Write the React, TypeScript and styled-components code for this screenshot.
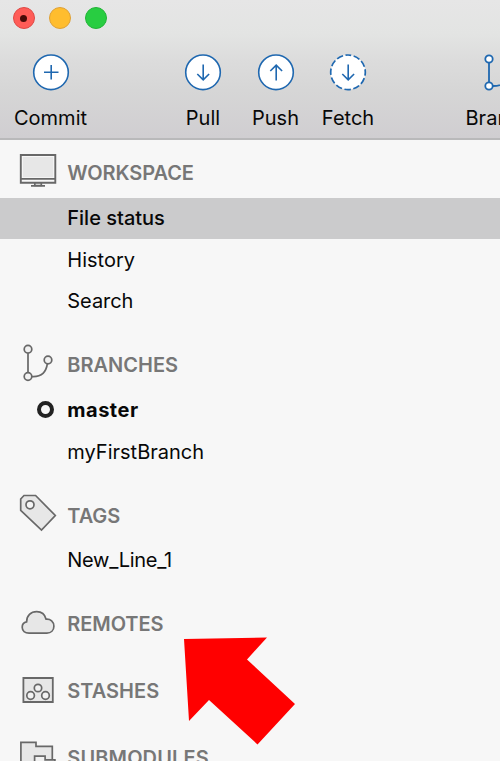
import React from 'react';
import styled, { createGlobalStyle } from 'styled-components';

const GlobalStyle = createGlobalStyle`
  * { box-sizing: border-box; }
  html, body { margin: 0; padding: 0; overflow: hidden; }
`;

const Window = styled.div`
  position: relative;
  width: 500px;
  height: 761px;
  overflow: hidden;
  background: #f7f7f7;
  color: #080808;
  font-family: Inter, 'Liberation Sans', sans-serif;
  font-size: 20px;
  line-height: 24px;
  white-space: nowrap;
`;

const TitleBar = styled.header`
  height: 140px;
  background: linear-gradient(#e6e6e6 0, #e3e4e3 34px, #dcdcdc 60px, #d6d6d6 90px, #d0ced1 138px);
  border-bottom: 2px solid #b9b9ba;
`;

const Lights = styled.div`
  display: flex;
  gap: 14.3px;
  height: 54px;
  padding: 7px 0 0 12.5px;
`;

const Light = styled.i<{ $fill: string; $edge: string }>`
  display: flex;
  align-items: center;
  justify-content: center;
  width: 22px;
  height: 22px;
  border-radius: 50%;
  background: ${p => p.$fill};
  border: 1px solid ${p => p.$edge};
`;

const Dot = styled.i`
  width: 7px;
  height: 7px;
  border-radius: 50%;
  background: #490b08;
`;

const Tools = styled.nav`
  display: flex;
`;

const Tool = styled.div<{ $width: number; $before?: number }>`
  flex: none;
  display: flex;
  flex-direction: column;
  align-items: center;
  gap: 15px;
  width: ${p => p.$width}px;
  margin-left: ${p => p.$before ?? 0}px;

  svg { display: block; overflow: visible; }
`;

const Label = styled.span`
  letter-spacing: 0;
`;

const Heading = styled.h2<{ $first?: boolean; $spacing?: number }>`
  display: flex;
  align-items: flex-start;
  height: ${p => (p.$first ? 58 : 67)}px;
  margin: 0;
  padding-top: ${p => (p.$first ? 8 : 17)}px;
  color: #777;
  font-size: 20px;
  font-weight: 600;
  letter-spacing: ${p => p.$spacing ?? 0}px;

  svg { flex: none; display: block; margin-left: 14px; overflow: visible; }
  span { margin: 13.3px 0 0 5.3px; }
`;

const Row = styled.div<{ $selected?: boolean; $weight?: number; $spacing?: number }>`
  display: flex;
  align-items: center;
  height: 41.67px;
  padding-bottom: ${p => (p.$selected ? 1 : 1.8)}px;
  background: ${p => (p.$selected ? '#cbcbcc' : 'transparent')};
  background-clip: content-box;
  font-weight: ${p => p.$weight ?? 400};
  letter-spacing: ${p => p.$spacing ?? 0}px;
`;

const Gutter = styled.span`
  flex: none;
  display: flex;
  justify-content: flex-end;
  width: 67.3px;
  padding-right: 13.5px;
`;

const Current = styled.i`
  width: 17px;
  height: 17px;
  border: 4px solid #222;
  border-radius: 50%;
`;

const Pointer = styled.svg`
  position: absolute;
  left: 180px;
  top: 634px;
`;

const blue = '#1f68b0';

const RoundIcon = ({ kind }: { kind: 'plus' | 'down' | 'up' | 'fetch' }) => (
  <svg width="36" height="37" fill="none" stroke={blue} strokeWidth="1.6">
    <circle cx="18" cy="18.3" r="17.3" fill="#fff" strokeWidth={kind === 'fetch' ? 1.7 : 1.6}
      strokeDasharray={kind === 'fetch' ? '6.6 2.46' : undefined} strokeDashoffset="3.3"
      transform="rotate(-90 18 18.3)" />
    {kind === 'plus' && <path d="M11 18.3h14.5M18.2 11v14.6" />}
    {(kind === 'down' || kind === 'fetch') && <path d="M18.2 10.5v15M12.3 20l5.9 5.8 5.9-5.8" />}
    {kind === 'up' && <path d="M18.2 26.5v-15M12.3 17l5.9-5.8 5.9 5.8" />}
  </svg>
);

const BranchTool = () => (
  <svg width="36" height="37" fill="none" stroke={blue} strokeWidth="1.8">
    <path d="M8 9v19M12 32c10 0 17-5 18-15" />
    <circle cx="8" cy="5" r="3.7" fill="#fff" />
    <circle cx="8" cy="32" r="3.7" fill="#fff" />
  </svg>
);

const grey = { fill: '#e7e7e7', stroke: '#686868', strokeWidth: 1.7 };

const Monitor = () => (
  <svg width="48" height="48" {...grey}>
    <path d="M20.8 34.5v3h6.5v-3z" fill="#f7f7f7" />
    <path d="M6.8 7h34.5v27.7H6.8z" fill="#f7f7f7" strokeWidth="1.9" />
    <path d="M8.9 9h30.3v20.2H8.9z" stroke="none" />
    <path d="M7 30.8h34M17 37.9h14" />
  </svg>
);

const Branches = () => (
  <svg width="48" height="48" {...grey} fill="none">
    <path d="M14 13v20M18 36.6c9 .5 14.2-4.2 15.4-13.2" />
    <circle cx="14" cy="9.2" r="3.8" fill="#f2f2f2" />
    <circle cx="14" cy="36.5" r="3.8" fill="#f2f2f2" />
    <circle cx="34" cy="20" r="3.8" fill="#f2f2f2" />
  </svg>
);

const Tag = () => (
  <svg width="48" height="48" {...grey}>
    <path d="M10 5.5h11.6l19.7 20L27.5 40 6.7 20.3V9z" />
    <circle cx="16" cy="14.8" r="4" fill="#f5f5f5" />
  </svg>
);

const Cloud = () => (
  <svg width="48" height="48" {...grey}>
    <path d="M15 34.1c-4 0-6.8-2.3-6.8-5.8 0-3 1.8-4.9 4.4-5.4 0-6.5 4.3-10.2 10.1-10.2 5 0 8.2 2.7 9.4 7.5 4.4-.4 7.8 2.5 7.8 7 0 4.2-3 6.9-7 6.9z" />
  </svg>
);

const Stash = () => (
  <svg width="48" height="48" {...grey}>
    <path d="M9.4 12h29.4v24H9.4z" strokeWidth="1.8" />
    <g fill="#f2f2f2">
      <circle cx="24" cy="22" r="3.7" />
      <circle cx="16.6" cy="29.5" r="3.8" />
      <circle cx="31.5" cy="29.5" r="3.8" />
    </g>
  </svg>
);

const Folders = () => (
  <svg width="48" height="48" {...grey}>
    <path d="M6.9 42V9.3H22v4h16.3V42z" />
    <path d="M20.6 44V23.2h10.5v3.6h9.8V44z" fill="#f1f1f1" />
  </svg>
);

export default function App() {
  return (
    <>
      <GlobalStyle />
      <Window>
        <TitleBar>
          <Lights>
            <Light $fill="#ff5c57" $edge="#df4945"><Dot /></Light>
            <Light $fill="#ffbd2e" $edge="#dfa136" />
            <Light $fill="#28cd41" $edge="#22b437" />
          </Lights>
          <Tools>
            <Tool $width={101}><RoundIcon kind="plus" /><Label>Commit</Label></Tool>
            <Tool $width={60} $before={72}><RoundIcon kind="down" /><Label>Pull</Label></Tool>
            <Tool $width={60} $before={12.5}><RoundIcon kind="up" /><Label>Push</Label></Tool>
            <Tool $width={60} $before={12.5}><RoundIcon kind="fetch" /><Label>Fetch</Label></Tool>
            <Tool $width={100} $before={71}><BranchTool /><Label>Branch</Label></Tool>
          </Tools>
        </TitleBar>
        <main>
          <Heading $first $spacing={-0.08}><Monitor /><span>WORKSPACE</span></Heading>
          <Row $selected $weight={500}><Gutter />File status</Row>
          <Row><Gutter />History</Row>
          <Row $spacing={-0.05}><Gutter />Search</Row>
          <Heading><Branches /><span>BRANCHES</span></Heading>
          <Row $weight={700} $spacing={0.5}><Gutter><Current /></Gutter>master</Row>
          <Row><Gutter />myFirstBranch</Row>
          <Heading $spacing={-0.1}><Tag /><span>TAGS</span></Heading>
          <Row $spacing={-0.28}><Gutter />New_Line_1</Row>
          <Heading $spacing={-0.08}><Cloud /><span>REMOTES</span></Heading>
          <Heading><Stash /><span>STASHES</span></Heading>
          <Heading $spacing={0.12}><Folders /><span>SUBMODULES</span></Heading>
        </main>
        <Pointer width="118" height="114">
          <path d="M4 5 87 3.5 67 25.5 115 70 77.5 110.5 29 66 9 87z" fill="#f00" />
        </Pointer>
      </Window>
    </>
  );
}
